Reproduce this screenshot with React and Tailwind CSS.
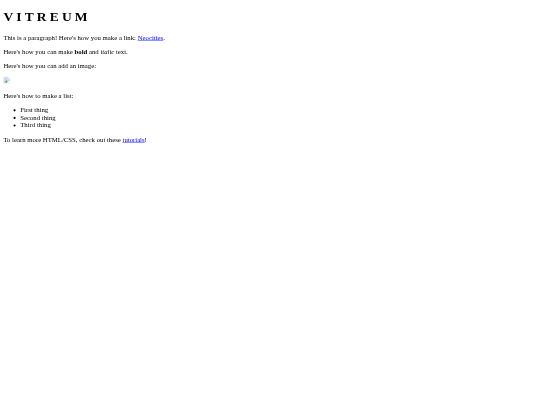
function BrokenImage() {
  return (
    <svg width="16" height="16" viewBox="0 0 16 16" className="inline-block align-baseline">
      <path d="M1 1h10l4 4v10H1z" fill="#fff" stroke="#a8a8a8" strokeWidth="1.2" />
      <path d="M2 2h8v4h4v3L9 14H2z" fill="#c5d9f5" />
      <path d="M3 13l4-5 3 3-3 3z" fill="#5fa648" />
      <path d="M10 15l5-5v5z" fill="#fff" />
    </svg>
  );
}

// the reference is a 1280px wide page shrunk to 540px
export default function App() {
  return (
    <div className="w-[540px] h-[405px] overflow-hidden bg-white">
      <div className="w-[1280px] h-[960px] origin-top-left scale-[0.421875] blur-[0.35px] font-['Liberation_Serif',serif] text-black text-base leading-[18px] px-2">
        <h1 className="text-[32px] leading-[37px] font-bold tracking-[7.5px] mb-[21.44px] pt-[21.44px]">VITREUM</h1>
        <p className="my-4">
          This is a paragraph! Here's how you make a link: <a href="#" className="text-[#0000ee] underline">Neocities</a>.
        </p>
        <p className="my-4">
          Here's how you can make <strong className="font-bold">bold</strong> and <em className="italic">italic</em> text.
        </p>
        <p className="my-4">Here's how you can add an image:</p>
        <p className="my-4"><BrokenImage /></p>
        <p className="my-4">Here's how to make a list:</p>
        <ul className="list-disc pl-10 my-4">
          <li>First thing</li>
          <li>Second thing</li>
          <li>Third thing</li>
        </ul>
        <p className="my-4">
          To learn more HTML/CSS, check out these <a href="#" className="text-[#0000ee] underline">tutorials</a>!
        </p>
      </div>
    </div>
  );
}
